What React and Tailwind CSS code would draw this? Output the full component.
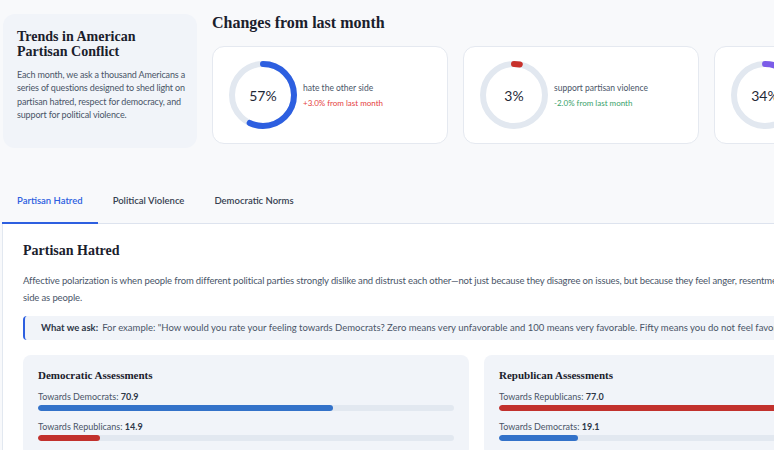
import React from "react";

const SANS = "font-['Lato','Noto_Sans',sans-serif]";
const SERIF = "font-['Liberation_Serif','DejaVu_Serif',serif]";

const CHANGES = [
  { value: 57, label: "hate the other side", delta: "+3.0% from last month", color: "#2d5fe0", up: true },
  { value: 3, label: "support partisan violence", delta: "-2.0% from last month", color: "#c8312b", up: false },
  { value: 34, label: "reject democratic norms", delta: "+1.0% from last month", color: "#7b5ce8", up: true },
];

const TABS = ["Partisan Hatred", "Political Violence", "Democratic Norms"];

function Donut({ value, color }) {
  const r = 31;
  const c = 2 * Math.PI * r;
  return (
    <div className="relative h-[68px] w-[68px] shrink-0">
      <svg width="68" height="68" viewBox="0 0 68 68" className="-rotate-90">
        <circle cx="34" cy="34" r={r} fill="none" stroke="#e2e8f0" strokeWidth="6" />
        <circle
          cx="34"
          cy="34"
          r={r}
          fill="none"
          stroke={color}
          strokeWidth="6"
          strokeLinecap="round"
          strokeDasharray={`${(value / 100) * c} ${c}`}
        />
      </svg>
      <div className="absolute inset-0 flex items-center justify-center text-[14px] text-[#1f2937]">
        {value}%
      </div>
    </div>
  );
}

function ChangeCard({ item }) {
  return (
    <div className="flex h-[98px] w-[236px] shrink-0 items-center gap-[6px] rounded-xl border border-[#e5e9f0] bg-white px-4">
      <Donut value={item.value} color={item.color} />
      <div className="flex flex-col gap-[4px] pt-[2px]">
        <p className="text-[8.5px] leading-[11px] text-[#4a5568]">{item.label}</p>
        <p className={`text-[8px] leading-[11px] ${item.up ? "text-[#e53e3e]" : "text-[#38a169]"}`}>
          {item.delta}
        </p>
      </div>
    </div>
  );
}

function Bar({ label, value, color }) {
  return (
    <div>
      <p className="text-[9px] leading-[12px] text-[#4a5568]">
        {label}: <span className="font-bold text-[#2d3748]">{value.toFixed(1)}</span>
      </p>
      <div className="mt-[2px] h-[6px] w-full overflow-hidden rounded-full bg-[#e2e8f0]">
        <div className="h-full rounded-full" style={{ width: `${value}%`, background: color }} />
      </div>
    </div>
  );
}

function Assessment({ title, bars }) {
  return (
    <div className="rounded-lg bg-[#f1f4f9] px-[15px] pt-[13px] pb-4">
      <h4 className={`${SERIF} text-[11px] font-bold leading-[14px] text-[#1a202c]`}>{title}</h4>
      <div className="mt-[9px] flex flex-col gap-[10px]">
        {bars.map((b) => (
          <Bar key={b.label} {...b} />
        ))}
      </div>
    </div>
  );
}

export default function App() {
  return (
    <div className={`${SANS} min-h-screen w-full overflow-hidden bg-[#f8f9fb]`}>
      <div className="w-[950px] pl-[2px] pt-[14px]">
        {/* top row */}
        <div className="flex gap-[15px]">
          <div className="ml-[1px] h-[134px] w-[194px] shrink-0 rounded-xl bg-[#f1f4f9] pl-[14px] pr-[12px] pt-[15px]">
            <h2 className={`${SERIF} text-[14px] font-bold leading-[15px] text-[#1a202c]`}>
              Trends in American Partisan Conflict
            </h2>
            <p className="mt-[9px] text-[9px] leading-[13.3px] tracking-[-0.15px] text-[#4a5568]">
              Each month, we ask a thousand Americans a series of questions designed to shed light on
              partisan hatred, respect for democracy, and support for political violence.
            </p>
          </div>
          <div>
            <h1 className={`${SERIF} text-[16px] font-bold leading-[18px] text-[#1a202c]`}>
              Changes from last month
            </h1>
            <div className="mt-[14px] flex gap-[15px]">
              {CHANGES.map((c) => (
                <ChangeCard key={c.label} item={c} />
              ))}
            </div>
          </div>
        </div>

        {/* tabs */}
        <div className="mt-[40px] flex border-b border-[#dde3ee]">
          {TABS.map((t, i) => (
            <div
              key={t}
              className={`-mb-px border-b-2 px-[15px] pb-[14px] pt-[6px] text-[9.5px] font-semibold ${
                i === 0 ? "border-[#2d5fe0] text-[#2d5fe0]" : "border-transparent text-[#374151]"
              }`}
            >
              {t}
            </div>
          ))}
        </div>

        {/* panel */}
        <div className="border-l border-[#e2e8f0] bg-white px-5 pt-[16px] pb-6">
          <h3 className={`${SERIF} text-[14px] font-bold text-[#1a202c]`}>Partisan Hatred</h3>
          <p className="mr-[-12px] mt-[11px] text-[9.5px] leading-[17px] tracking-[-0.13px] text-[#4a5568]">
            Affective polarization is when people from different political parties strongly dislike and
            distrust each other—not just because they disagree on issues, but because they feel anger,
            resentment, or even contempt toward the other side as people.
          </p>
          <div className="mt-[10px] flex h-[24px] items-center whitespace-nowrap rounded-[4px] border-l-2 border-[#2d5fe0] bg-[#f1f4f9] pl-4 text-[9.5px] text-[#4a5568]">
            <span className="font-bold text-[#2d3748]">What we ask:</span>
            <span className="ml-1">
              For example: "How would you rate your feeling towards Democrats? Zero means very unfavorable and
              100 means very favorable. Fifty means you do not feel favorable or unfavorable."
            </span>
          </div>
          <div className="mt-[15px] grid grid-cols-2 gap-[15px]">
            <Assessment
              title="Democratic Assessments"
              bars={[
                { label: "Towards Democrats", value: 70.9, color: "#3372c9" },
                { label: "Towards Republicans", value: 14.9, color: "#c2312d" },
              ]}
            />
            <Assessment
              title="Republican Assessments"
              bars={[
                { label: "Towards Republicans", value: 77.0, color: "#c2312d" },
                { label: "Towards Democrats", value: 19.1, color: "#3372c9" },
              ]}
            />
          </div>
        </div>
      </div>
    </div>
  );
}
